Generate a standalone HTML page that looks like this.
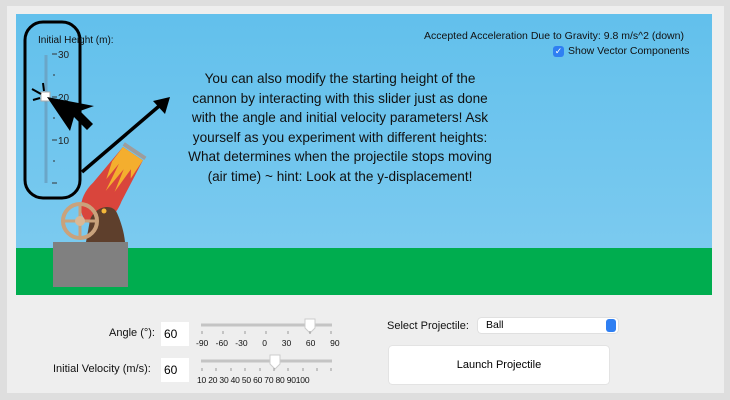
<!DOCTYPE html><html><head><style>
body{margin:0;width:730px;height:400px;background:#dedede;font-family:"Liberation Sans",sans-serif;overflow:hidden;position:relative}
.panel{position:absolute;left:7px;top:6px;width:717px;height:387px;background:#eeeeee}
.sky{position:absolute;left:16px;top:14px;width:696px;height:281px;background:linear-gradient(#62c0ec,#80ccf0);overflow:hidden}
.ground{position:absolute;left:0;top:234px;width:696px;height:47px;background:#00ad4f}
.t{position:absolute;font-size:11px;color:#111;white-space:nowrap}
.main{position:absolute;left:182px;top:69px;width:316px;text-align:center;font-size:13.6px;line-height:19.6px;color:#111}
.inp{position:absolute;width:28px;height:24px;background:#fff;font-size:12px;line-height:24px;padding-left:3px;box-sizing:border-box}
</style></head><body>
<div class="panel"></div>
<div class="sky">
<div class="ground"></div>
</div>
<svg style="position:absolute;left:0;top:0" width="730" height="400">
<rect x="53" y="242" width="75" height="45" fill="#808080"/>
<g transform="rotate(33.7 134 152)">
<path d="M122 154 L146 154 L151 200 C156 222 144 236 134 236 C124 236 112 222 117 200Z" fill="#d9453c"/>
<path d="M122 154 L146 154 L146 176 L141 168 L140 196 L135 172 L132 200 L128 170 L126 190 L121 172Z" fill="#f4ae2e"/>
<rect x="121" y="149" width="26" height="4" fill="#9d9d9d"/>
</g>
<path d="M86 242 L90 220 C94 207 112 202 117 213 C121 222 124 232 125 242Z" fill="#5e3f2c"/>
<circle cx="104" cy="211" r="2.5" fill="#f4b73a"/>
<circle cx="80" cy="221" r="17" fill="none" stroke="#c9a27c" stroke-width="4"/>
<line x1="63" y1="221" x2="97" y2="221" stroke="#c9a27c" stroke-width="3"/>
<line x1="80" y1="204" x2="80" y2="238" stroke="#c9a27c" stroke-width="3"/>
<circle cx="80" cy="221" r="5" fill="#d9b896"/>
<rect x="25" y="22" width="55" height="176" rx="18" fill="none" stroke="#000" stroke-width="3"/>
<line x1="46" y1="55" x2="46" y2="183" stroke="#6aa6c8" stroke-width="3"/>
<g stroke="#333" stroke-width="1">
<line x1="52" y1="54" x2="57" y2="54"/><line x1="53" y1="75" x2="55" y2="75"/><line x1="52" y1="97" x2="57" y2="97"/><line x1="53" y1="118" x2="55" y2="118"/><line x1="52" y1="140" x2="57" y2="140"/><line x1="53" y1="161" x2="55" y2="161"/><line x1="52" y1="183" x2="57" y2="183"/></g>
<text x="58" y="58" font-size="10" fill="#222">30</text>
<text x="58" y="101" font-size="10" fill="#222">20</text>
<text x="58" y="144" font-size="10" fill="#222">10</text>
<rect x="41" y="92" width="9" height="9" fill="#fff" stroke="#aaa"/>
<g stroke="#000" stroke-width="2"><line x1="32" y1="89" x2="41" y2="94"/><line x1="33" y1="100" x2="40" y2="98"/><line x1="43" y1="83" x2="44" y2="91"/></g>
<path d="M47 97 L94 106 L80 111 L93 124 L87 130 L74 117 L70 131Z" fill="#000"/>
<line x1="82" y1="172" x2="165" y2="101" stroke="#000" stroke-width="3.5"/>
<path d="M170 97 L153 101 L165 114Z" fill="#000"/>
<line x1="201" y1="325" x2="332" y2="325" stroke="#c4c4c4" stroke-width="3"/>
<line x1="201" y1="361" x2="332" y2="361" stroke="#c4c4c4" stroke-width="3"/>
<path d="M305 319 h10 v9 l-5 5 l-5 -5Z" fill="#fff" stroke="#ccc"/>
<path d="M270 355 h10 v9 l-5 5 l-5 -5Z" fill="#fff" stroke="#ccc"/>
<g stroke="#999" stroke-width="1">
<line x1="202" y1="331" x2="202" y2="334"/><line x1="223" y1="331" x2="223" y2="334"/><line x1="245" y1="331" x2="245" y2="334"/><line x1="266" y1="331" x2="266" y2="334"/><line x1="288" y1="331" x2="288" y2="334"/><line x1="310" y1="331" x2="310" y2="334"/><line x1="331" y1="331" x2="331" y2="334"/>
<line x1="202" y1="368" x2="202" y2="371"/><line x1="216" y1="368" x2="216" y2="371"/><line x1="231" y1="368" x2="231" y2="371"/><line x1="245" y1="368" x2="245" y2="371"/><line x1="260" y1="368" x2="260" y2="371"/><line x1="274" y1="368" x2="274" y2="371"/><line x1="288" y1="368" x2="288" y2="371"/><line x1="303" y1="368" x2="303" y2="371"/><line x1="317" y1="368" x2="317" y2="371"/><line x1="331" y1="368" x2="331" y2="371"/></g>
</svg>
<div class="t" style="left:38px;top:35px;font-size:10px">Initial Height (m):</div>
<div class="t" style="left:424px;top:30px;font-size:10.5px">Accepted Acceleration Due to Gravity: 9.8 m/s^2 (down)</div>
<div style="position:absolute;left:553px;top:46px;width:11px;height:11px;background:#2f7ff2;border-radius:3px;color:#fff;font-size:9px;line-height:11px;text-align:center">✓</div>
<div class="t" style="left:568px;top:45px;font-size:10.5px">Show Vector Components</div>
<div class="main">You can also modify the starting height of the cannon by interacting with this slider just as done with the angle and initial velocity parameters! Ask yourself as you experiment with different heights: What determines when the projectile stops moving (air time) ~ hint: Look at the y-displacement!</div>
<div class="t" style="left:109px;top:327px">Angle (°):</div>
<div class="inp" style="left:161px;top:322px">60</div>
<div class="t" style="left:53px;top:363px">Initial Velocity (m/s):</div>
<div class="inp" style="left:161px;top:358px">60</div>
<div class="t" style="left:196px;top:338px;font-size:8.5px;word-spacing:5px">-90 -60 -30 &nbsp;0 &nbsp;30 &nbsp;60 &nbsp;90</div>
<div class="t" style="left:197px;top:375px;font-size:8.5px;letter-spacing:-0.2px">10 20 30 40 50 60 70 80 90100</div>
<div class="t" style="left:387px;top:320px">Select Projectile:</div>
<div style="position:absolute;left:478px;top:318px;width:140px;height:15px;background:#fff;border-radius:3px;box-shadow:0 0 1px #999;font-size:10.5px;line-height:15px;padding-left:8px;box-sizing:border-box">Ball<div style="position:absolute;right:2px;top:1px;width:10px;height:13px;background:#2f7ff2;border-radius:3px"></div></div>
<div style="position:absolute;left:389px;top:346px;width:220px;height:38px;background:#fff;border-radius:3px;box-shadow:0 0 1px #aaa;font-size:11px;line-height:38px;text-align:center">Launch Projectile</div>
</body></html>
